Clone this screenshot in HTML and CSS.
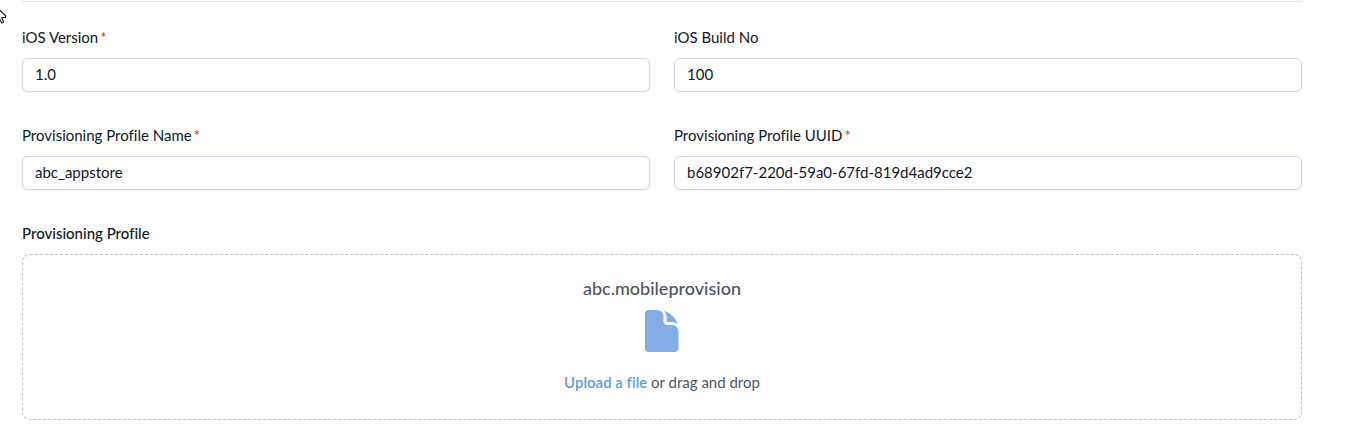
FILE: index.html
```html
<!DOCTYPE html>
<html lang="en">
<head>
	<meta charset="utf-8">
	<meta name="viewport" content="width=device-width, initial-scale=1.0">
	<title>Provisioning Profile</title>
	<link rel="stylesheet" href="styles.css">
</head>
<body>
<svg class="cursor" width="7" height="16" viewBox="0 0 7 16" aria-hidden="true">
	<path d="M-4.500 -4.500V11.500L-1 9L1.500 13.500Q2.500 14.500 3.500 13L2 9.500V8.500H5.500V6.500L-1 .500" fill="#fff" stroke="#222" stroke-width="1.200"/>
</svg>
<form class="form">
	<div class="fields">
		<div class="field">
			<label for="version">iOS Version<span class="required">*</span></label>
			<input type="text" id="version" value="1.0">
		</div>
		<div class="field">
			<label for="build">iOS Build No</label>
			<input type="text" id="build" value="100">
		</div>
		<div class="field">
			<label for="profile_name">Provisioning Profile Name<span class="required">*</span></label>
			<input type="text" id="profile_name" value="abc_appstore">
		</div>
		<div class="field">
			<label for="profile_uuid">Provisioning Profile UUID<span class="required">*</span></label>
			<input type="text" id="profile_uuid" value="b68902f7-220d-59a0-67fd-819d4ad9cce2">
		</div>
	</div>
	<div class="field">
		<p class="title">Provisioning Profile</p>
		<div class="dropzone">
			<p class="file_name">abc.mobileprovision</p>
			<svg class="file_icon" width="34" height="42" viewBox="0 0 34 42" aria-hidden="true">
				<path d="M4 0H12.500A6 6 0 0 1 18.500 6V11A4 4 0 0 0 22.500 15H27.500A6 6 0 0 1 33.500 21V38A4 4 0 0 1 29.500 42H4A4 4 0 0 1 0 38V4A4 4 0 0 1 4 0Z"/>
				<path d="M19 .700A22 22 0 0 1 32.800 14.500A9 9 0 0 0 27.500 12H22.500A1 1 0 0 1 21.500 11V6A9 9 0 0 0 19 .700Z"/>
			</svg>
			<p class="hint"><label class="upload" for="file">Upload a file</label> or drag and drop</p>
			<input type="file" id="file" class="file_input">
		</div>
	</div>
</form>
</body>
</html>
```

FILE: styles.css
```css
*	{margin:0;padding:0;box-sizing:border-box;}
body	{font-family:Lato, "Liberation Sans", sans-serif;line-height:20px;font-size:15px;font-variant-ligatures:none;color:#111827;background-color:#fff;}
.cursor	{position:absolute;left:0;top:9px;}
.form	{margin:1px 57px 0 22px;padding-top:25px;border-top:1px solid #e5e7eb;}
.fields	{display:grid;grid-template-columns:1fr 1fr;gap:33px 24px;margin-bottom:33px;}
.field label	{display:block;}
.field .required	{margin-left:2px;color:#dc2626;}
.field input[type="text"]	{display:block;width:100%;height:34px;margin-top:11px;padding:0 12px 2px;border:1px solid #d3d3e3;border-radius:6px;font:inherit;color:inherit;background-color:#fff;box-shadow:0 1px 2px rgba(0, 0, 0, 0.05);}
.title	{font-weight:500;}
.dropzone	{display:flex;flex-direction:column;align-items:center;position:relative;margin-top:11px;padding:19px 24px 27px;border:1px dashed #c4c4c4;border-radius:8px;}
.file_name	{line-height:28px;font-size:18px;font-weight:500;color:#4b5563;}
.file_icon	{margin:8px 0 20px;fill:#84ace9;}
.hint	{color:#4b5563;}
.field .upload	{display:inline;font-weight:600;color:#5f9be3;cursor:pointer;}
.file_input	{position:absolute;width:1px;height:1px;opacity:0;}
```
